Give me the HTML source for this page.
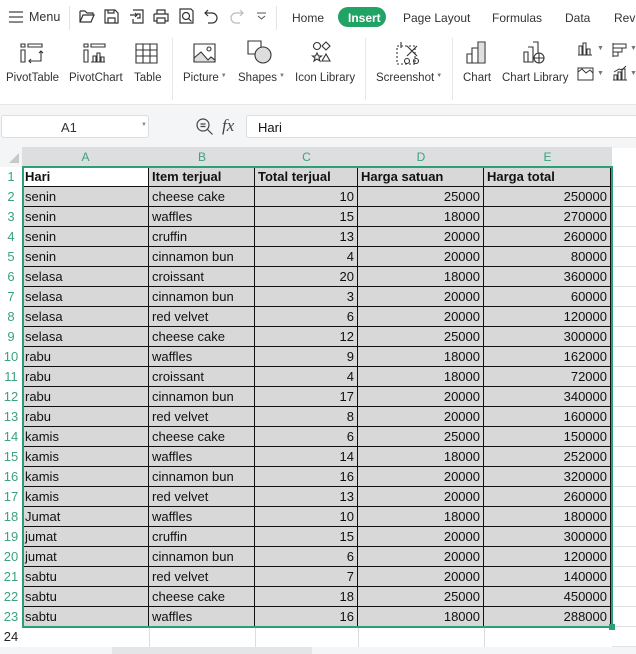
<!DOCTYPE html>
<html><head><meta charset="utf-8">
<style>
*{margin:0;padding:0;box-sizing:border-box}
body{width:636px;height:654px;overflow:hidden;background:#fff;font-family:"Liberation Sans",sans-serif;position:relative;color:#222}
.a{position:absolute}
.t{font-size:12px;color:#333;white-space:nowrap}
.lbl{font-size:11.5px;color:#333;white-space:nowrap;position:absolute;top:72px}
.cr{font-size:6px;color:#777;vertical-align:4px;margin-left:2px}
svg{position:absolute;overflow:visible}
.cell{position:absolute;height:20px;border-right:1px solid #111;border-bottom:1px solid #111;background:#d8d8d8;font-size:13px;line-height:20px;padding:0 3px;white-space:nowrap;overflow:hidden;color:#111}
.r{text-align:right}
.rh{position:absolute;left:0;width:22px;height:20px;font-size:13px;line-height:20px;text-align:center;color:#3aa37f}
.ch{position:absolute;top:148px;height:18px;font-size:12px;line-height:18px;text-align:center;color:#3aa37f}
</style></head><body>
<svg style="left:9px;top:11px" width="14" height="12"><path d="M0 1h14M0 6h14M0 11h14" stroke="#444" stroke-width="1.2"/></svg>
<div class="a t" style="left:29px;top:10px;font-size:12.5px">Menu</div>
<div class="a" style="left:69px;top:6px;width:1px;height:24px;background:#e3e3e3"></div>
<svg style="left:79px;top:9px" width="16" height="15" fill="none" stroke="#333" stroke-width="1.2"><path d="M1 2h5l2 2h6v2M1 2v11h11l3-7H4L1 13"/></svg>
<svg style="left:104px;top:9px" width="15" height="15" fill="none" stroke="#333" stroke-width="1.2"><path d="M1 1h10l3 3v10H1z M4 14V9h7v5 M4 1v3h6V1"/></svg>
<svg style="left:129px;top:9px" width="15" height="15" fill="none" stroke="#333" stroke-width="1.2"><path d="M4 1h10v13H4V10 M1 6h7M6 4l2 2-2 2 M8 5h3v4H8"/></svg>
<svg style="left:153px;top:9px" width="16" height="15" fill="none" stroke="#333" stroke-width="1.2"><path d="M4 5V1h8v4 M1 5h14v7h-3 M4 12H1V5 M4 9h8v5H4z"/></svg>
<svg style="left:179px;top:8px" width="16" height="16" fill="none" stroke="#333" stroke-width="1.2"><path d="M1 1h11l2 2v12H1z"/><circle cx="7" cy="8" r="3.5"/><path d="M9.5 10.5l3 3"/></svg>
<svg style="left:204px;top:9px" width="14" height="14" fill="none" stroke="#333" stroke-width="1.2"><path d="M4 1L1 4l3 3 M1 4h7a5 5 0 010 10H4"/></svg>
<svg style="left:230px;top:9px" width="14" height="14" fill="none" stroke="#bbb" stroke-width="1.2"><path d="M10 1l3 3-3 3 M13 4H6a5 5 0 000 10h4"/></svg>
<svg style="left:257px;top:13px" width="9" height="7" fill="none" stroke="#555" stroke-width="1"><path d="M0 0h9M1 3l3.5 3 3.5-3"/></svg>
<div class="a" style="left:276px;top:6px;width:1px;height:24px;background:#e3e3e3"></div>
<div class="a t" style="left:292px;top:11px">Home</div>
<div class="a" style="left:338px;top:7px;width:48px;height:20px;border-radius:10px;background:#21a366"></div>
<div class="a t" style="left:348px;top:11px;color:#fff;font-weight:bold">Insert</div>
<div class="a t" style="left:403px;top:11px">Page Layout</div>
<div class="a t" style="left:492px;top:11px">Formulas</div>
<div class="a t" style="left:565px;top:11px">Data</div>
<div class="a t" style="left:614px;top:11px">Revi</div>
<svg style="left:21px;top:44px" width="22" height="20" fill="none" stroke="#333" stroke-width="1.1"><path d="M0 0h4v3H0z M7 0h14v3H7z M0 6h4v12H0z M20 7v10H8 M10 15l-2 2 2 2 M18 9l2-2 2 2"/></svg>
<div class="lbl" style="left:6px">PivotTable</div>
<svg style="left:84px;top:44px" width="22" height="20" fill="none" stroke="#333" stroke-width="1.1"><path d="M0 0h4v3H0z M7 0h14v3H7z M0 6h4v12H0z M7 18h14 M9 18v-6h3v6 M13 18V9h3v9 M17 18v-5h3v5"/></svg>
<div class="lbl" style="left:69px">PivotChart</div>
<svg style="left:136px;top:44px" width="22" height="20" fill="none" stroke="#333" stroke-width="1.1"><path d="M0 0h21v19H0z M0 6h21M0 12h21M7 0v19M14 0v19"/></svg>
<div class="lbl" style="left:134px">Table</div>
<div class="a" style="left:172px;top:38px;width:1px;height:62px;background:#e6e6e6"></div>
<svg style="left:194px;top:44px" width="22" height="20" fill="none" stroke="#333" stroke-width="1.1"><path d="M0 0h21v18H0z"/><path d="M0 14l7-6 7 8 3-3 4 3v2H0z" fill="#ddd"/><circle cx="15" cy="5" r="2"/></svg>
<div class="lbl" style="left:183px">Picture<span class="cr">▼</span></div>
<svg style="left:248px;top:41px" width="26" height="24" fill="none" stroke="#333" stroke-width="1.1"><path d="M0 0h13v13H0z"/><circle cx="15" cy="14" r="8" fill="#ddd"/></svg>
<div class="lbl" style="left:238px">Shapes<span class="cr">▼</span></div>
<svg style="left:313px;top:42px" width="22" height="22" fill="none" stroke="#333" stroke-width="1.1"><circle cx="4" cy="4" r="3.5"/><path d="M13 0l4 4-4 4-4-4z M4 11l1.5 3h3l-2.5 2 1 3-3-2-3 2 1-3-2.5-2h3z M13 12l4 7H9z"/></svg>
<div class="lbl" style="left:295px">Icon Library</div>
<div class="a" style="left:365px;top:38px;width:1px;height:62px;background:#e6e6e6"></div>
<svg style="left:397px;top:42px" width="24" height="24" fill="none" stroke="#333" stroke-width="1.1"><path d="M0 4h18v18H0z" stroke-dasharray="2 2"/><path d="M4 0v6M10 14l10-10M20 14L10 4" /><circle cx="10" cy="19" r="2.5"/><circle cx="19" cy="19" r="2.5"/></svg>
<div class="lbl" style="left:376px">Screenshot<span class="cr">▼</span></div>
<div class="a" style="left:452px;top:38px;width:1px;height:62px;background:#e6e6e6"></div>
<svg style="left:467px;top:42px" width="20" height="22" fill="none" stroke="#333" stroke-width="1.1"><path d="M0 12h5v9H0z M5 6h6v15H5z M11 0h7v21h-7z" /><path d="M12 1h5v19h-5z" fill="#e0e0e0" stroke="none"/></svg>
<div class="lbl" style="left:463px">Chart</div>
<svg style="left:524px;top:42px" width="22" height="22" fill="none" stroke="#333" stroke-width="1.1"><path d="M0 10h4v10H0z M4 5h5v15H4 M9 0h5v11"/><circle cx="15" cy="16" r="5"/><path d="M10 16h10M15 11v10"/></svg>
<div class="lbl" style="left:502px">Chart Library</div>
<svg style="left:578px;top:42px" width="14" height="14" fill="none" stroke="#333" stroke-width="1"><path d="M0 13h14 M1 13V4h3v9 M5 13V1h3v12 M9 13V7h3v6"/></svg>
<div class="a" style="left:597px;top:45px;font-size:7px;color:#777">▼</div>
<svg style="left:613px;top:43px" width="14" height="14" fill="none" stroke="#333" stroke-width="1"><path d="M0 0v14 M0 1h13v4H0 M0 5h9v4H0 M0 9h5v4H0"/></svg>
<div class="a" style="left:630px;top:45px;font-size:7px;color:#777">▼</div>
<svg style="left:578px;top:67px" width="15" height="14" fill="none" stroke="#333" stroke-width="1"><path d="M0 1h15v12H0z M0 5l4-3 4 4 4-3 3 3"/></svg>
<div class="a" style="left:597px;top:70px;font-size:7px;color:#777">▼</div>
<svg style="left:613px;top:66px" width="14" height="15" fill="none" stroke="#333" stroke-width="1"><path d="M0 14h14 M1 14V9h3v5 M5 14V6h3v8 M9 14V3h3v11 M1 6l5-3 3 1 4-4"/></svg>
<div class="a" style="left:630px;top:70px;font-size:7px;color:#777">▼</div>
<div class="a" style="left:0;top:104px;width:636px;height:44px;background:#f4f5f6;border-top:1px solid #e8e8e8"></div>
<div class="a" style="left:1px;top:115px;width:148px;height:23px;background:#fff;border:1px solid #ddd;border-radius:3px"></div>
<div class="a t" style="left:61px;top:120px;font-size:13px">A1</div>
<div class="a" style="left:141px;top:122px;font-size:6px;color:#888">▼</div>
<svg style="left:196px;top:118px" width="18" height="18" fill="none" stroke="#444" stroke-width="1.2"><circle cx="7" cy="7" r="6"/><path d="M11.5 11.5l5 5 M4.5 6h5M4.5 8.5h5"/></svg>
<div class="a" style="left:222px;top:116px;font-family:'Liberation Serif',serif;font-style:italic;font-size:17px;color:#444">fx</div>
<div class="a" style="left:246px;top:115px;width:392px;height:23px;background:#fff;border:1px solid #ddd;border-radius:3px"></div>
<div class="a t" style="left:258px;top:120px;font-size:13px;color:#111">Hari</div>
<div class="a" style="left:0;top:147px;width:22px;height:20px;background:#f4f5f6"></div>
<svg style="left:9px;top:153px" width="10" height="10"><path d="M10 0v10H0z" fill="#c8c8c8"/></svg>
<div class="a" style="left:22px;top:147px;width:590px;height:20px;background:#dcdee0"></div>
<div class="ch" style="left:22px;width:127px">A</div>
<div class="ch" style="left:149px;width:106px">B</div>
<div class="ch" style="left:255px;width:103px">C</div>
<div class="ch" style="left:358px;width:126px">D</div>
<div class="ch" style="left:484px;width:127px">E</div>
<div class="a" style="left:612px;top:167px;width:24px;height:480px;background:repeating-linear-gradient(to bottom,#fff 0,#fff 19px,#e2e2e2 19px,#e2e2e2 20px)"></div>
<div id="g"></div>
<div class="rh" style="top:627px;color:#222">24</div>
<div class="a" style="left:22px;top:627px;width:590px;height:20px;background:linear-gradient(to right,transparent 127px,#ddd 127px,#ddd 128px,transparent 128px,transparent 233px,#ddd 233px,#ddd 234px,transparent 234px,transparent 336px,#ddd 336px,#ddd 337px,transparent 337px,transparent 462px,#ddd 462px,#ddd 463px,transparent 463px)"></div>
<div class="a" style="left:0;top:647px;width:636px;height:7px;background:#f4f5f6"></div>
<div class="a" style="left:112px;top:647px;width:200px;height:7px;background:#e4e5e7"></div>
<div class="a" style="left:22px;top:166px;width:591px;height:462px;border:2px solid #2e9e79"></div>
<div class="a" style="left:609px;top:624px;width:6px;height:6px;background:#2e9e79"></div>
<script>
var d=[["Hari","Item terjual","Total terjual","Harga satuan","Harga total"],
["senin","cheese cake",10,25000,250000],["senin","waffles",15,18000,270000],["senin","cruffin",13,20000,260000],["senin","cinnamon bun",4,20000,80000],
["selasa","croissant",20,18000,360000],["selasa","cinnamon bun",3,20000,60000],["selasa","red velvet",6,20000,120000],["selasa","cheese cake",12,25000,300000],
["rabu","waffles",9,18000,162000],["rabu","croissant",4,18000,72000],["rabu","cinnamon bun",17,20000,340000],["rabu","red velvet",8,20000,160000],
["kamis","cheese cake",6,25000,150000],["kamis","waffles",14,18000,252000],["kamis","cinnamon bun",16,20000,320000],["kamis","red velvet",13,20000,260000],
["Jumat","waffles",10,18000,180000],["jumat","cruffin",15,20000,300000],["jumat","cinnamon bun",6,20000,120000],
["sabtu","red velvet",7,20000,140000],["sabtu","cheese cake",18,25000,450000],["sabtu","waffles",16,18000,288000]];
var x=[22,149,255,358,484,611],h="";
d.forEach(function(r,i){var y=167+i*20;h+='<div class="rh" style="top:'+y+'px">'+(i+1)+'</div>';
r.forEach(function(v,j){var s='left:'+x[j]+'px;top:'+y+'px;width:'+(x[j+1]-x[j])+'px;';if(i==0)s+='font-weight:bold;';if(i==0&&j==0)s+='background:#fff;';
h+='<div class="cell'+(i>0&&j>1?' r':'')+'" style="'+s+'">'+v+'</div>';});});
document.getElementById('g').innerHTML=h;
</script>
</body></html>
